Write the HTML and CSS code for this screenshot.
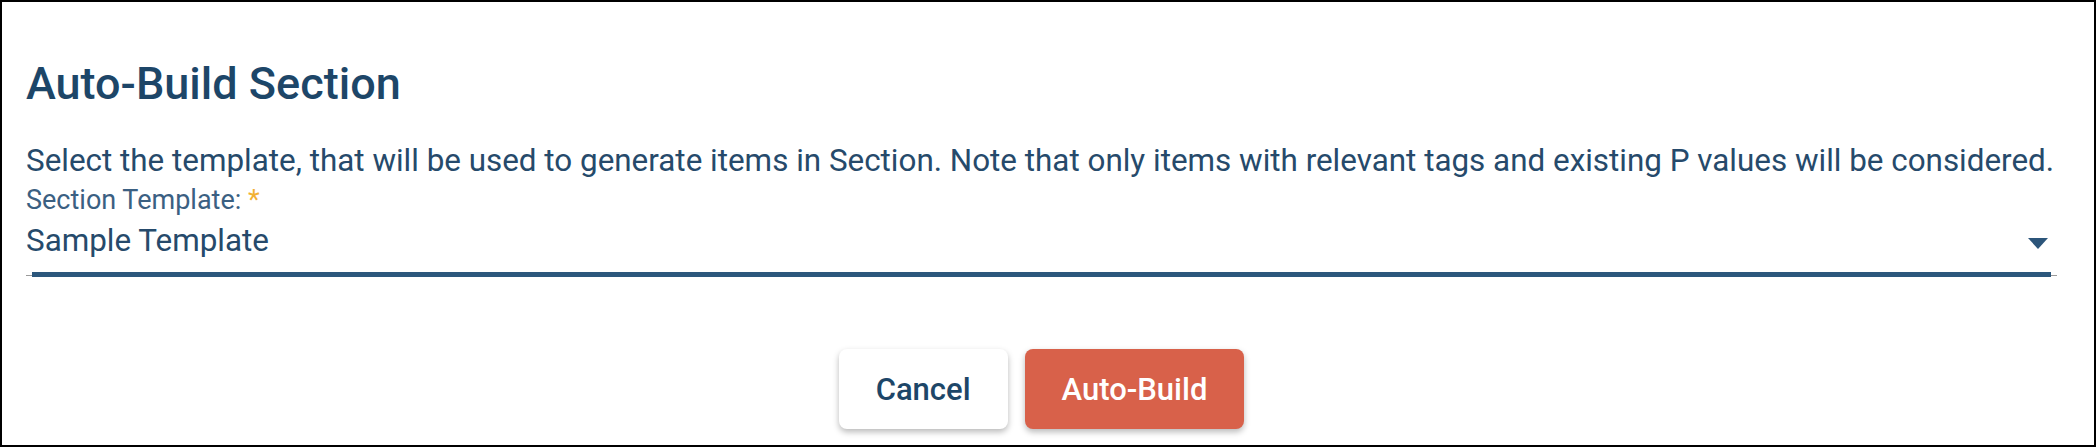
FILE: index.html
```html
<!DOCTYPE html>
<html>
<head>
<meta charset="utf-8">
<link rel="stylesheet" href="styles.css">
</head>
<body>
<div class="dialog">
  <h1 class="title">Auto-Build Section</h1>
  <p class="desc">Select the template, that will be used to generate items in Section. Note that only items with relevant tags and existing P values will be considered.</p>
  <div class="field">
    <label class="label">Section Template: <span class="req">*</span></label>
    <div class="select">
      <span class="value">Sample Template</span>
      <svg class="arrow" viewBox="0 0 20 11" width="20" height="11"><path d="M0 0 L20 0 L10 11 Z" fill="#2c557a"/></svg>
    </div>
  </div>
  <div class="actions">
    <button class="btn btn-cancel">Cancel</button>
    <button class="btn btn-primary">Auto-Build</button>
  </div>
</div>
</body>
</html>
```
FILE: styles.css
```css
html, body {
  margin: 0;
  padding: 0;
  background: #fff;
}
.dialog {
  box-sizing: border-box;
  width: 2096px;
  height: 447px;
  border: 2px solid #000;
  padding: 56px 37px 0 24px;
  font-family: Roboto, "Liberation Sans", sans-serif;
  color: #234868;
}
.title {
  margin: 0;
  font-size: 45px;
  line-height: 52px;
  font-weight: 500;
  color: #1d4668;
}
.desc {
  margin: 33px 0 0 0;
  font-size: 31.4px;
  line-height: 36px;
  font-weight: 400;
  color: #264a6b;
}
.field {
  margin-top: 5px;
}
.label {
  display: block;
  font-size: 27px;
  line-height: 32px;
  color: #3b6082;
}
.req {
  color: #f2b134;
}
.select {
  position: relative;
  display: flex;
  align-items: center;
  margin-top: 7px;
  padding-bottom: 16px;
  border-bottom: 1px solid #9a9a9a;
}
.select::after {
  content: "";
  position: absolute;
  left: 6px;
  right: 6px;
  bottom: -2px;
  height: 5px;
  background: #2c577c;
}
.value {
  flex: 1;
  font-size: 31.4px;
  line-height: 36px;
  color: #264a6b;
}
.arrow {
  margin-right: 9px;
  margin-top: 4px;
}
.actions {
  display: flex;
  justify-content: center;
  gap: 17px;
  margin-top: 73px;
}
.btn {
  height: 80px;
  border: none;
  border-radius: 8px;
  font-family: Roboto, "Liberation Sans", sans-serif;
  font-size: 31px;
  font-weight: 500;
  padding: 0 37px;
  box-shadow: 0 3px 6px rgba(0, 0, 0, 0.28);
  cursor: pointer;
}
.btn-cancel {
  background: #fff;
  color: #1d4668;
}
.btn-primary {
  background: #d8614a;
  color: #fff;
}
```
